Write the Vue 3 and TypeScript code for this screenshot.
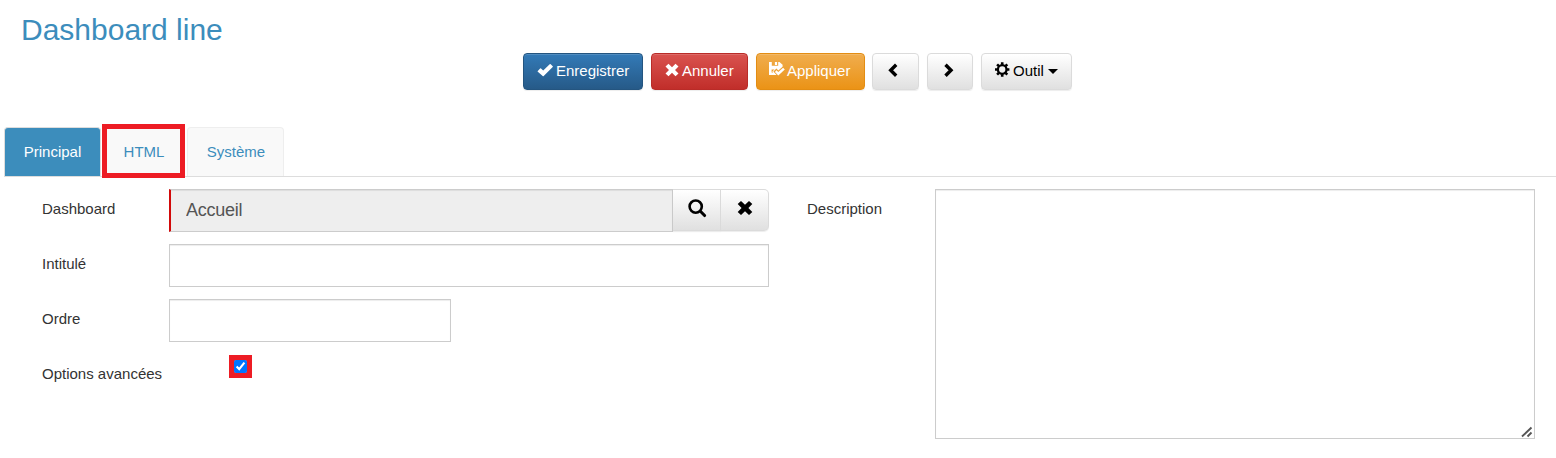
<script setup lang="ts">
import { ref } from 'vue'

interface Tab {
  id: string
  label: string
  highlighted?: boolean
}

const tabs: Tab[] = [
  { id: 'main', label: 'Principal' },
  { id: 'html', label: 'HTML', highlighted: true },
  { id: 'system', label: 'Système' },
]
const activeTab = ref('main')
const dashboard = ref('Accueil')
const title = ref('')
const order = ref('')
const description = ref('')
const advanced = ref(true)
</script>

<template>
  <main class="page">
    <h1>Dashboard line</h1>

    <div class="toolbar">
      <button type="button" class="btn primary">
        <svg width="16" height="14" viewBox="-.4 -.4 16 14"><path fill="currentColor" d="M.4 7.5 2.7 5.1q.4-.4.9 0l2.2 2.1L12.3.8q.5-.4 1 0l2 2q.4.5 0 .9l-9 9q-.5.5-1 0L.4 8.4q-.4-.4 0-.9z" /></svg>
        <span>Enregistrer</span>
      </button>
      <button type="button" class="btn danger">
        <svg width="14" height="14" viewBox="0 0 14 14"><path fill="currentColor" d="M3.5.7 7 4.2 10.5.7l3 2.9L10 7l3.5 3.4-3 2.9L7 9.8l-3.5 3.5-3-2.9L4 7 .5 3.6z" /></svg>
        <span>Annuler</span>
      </button>
      <button type="button" class="btn warning">
        <svg width="16" height="14" viewBox="0 0 16 14"><path fill="currentColor" fill-rule="evenodd" d="M0 0h2.8v3.8h6.4V0h1.3L13.6 2.8v2L9.3 8.4 7.4 6.6 4.4 9.6 7.6 13H0zM5.9 0h2.2v2.9H5.9zM2.6 7.4v3.2h1.6L3.3 9.6l2.2-2.2z" /><path fill="currentColor" d="m5.9 10 1.6-1.7 1.8 1.8 4.8-4.4 1.7 1.7-6.5 6.1z" /></svg>
        <span>Appliquer</span>
      </button>
      <button type="button" class="btn plain prev" aria-label="Précédent">
        <svg width="10" height="15" viewBox="0 0 10 15"><path fill="none" stroke="currentColor" stroke-width="3.4" d="M8.2 1.8 2.7 7.3l5.5 5.5" /></svg>
      </button>
      <button type="button" class="btn plain next" aria-label="Suivant">
        <svg width="10" height="15" viewBox="0 0 10 15"><path fill="none" stroke="currentColor" stroke-width="3.4" d="m1.5 1.8 5.5 5.5-5.5 5.5" /></svg>
      </button>
      <button type="button" class="btn plain tools">
        <svg width="15" height="15" viewBox="0 0 15 15">
          <circle cx="7.2" cy="7.5" r="4.3" fill="none" stroke="currentColor" stroke-width="2.3" />
          <path stroke="currentColor" stroke-width="2.6" d="M7.2.2v2.6M7.2 12.2v2.6M0 7.5h2.6M11.8 7.5h2.6M2.1 2.4l1.8 1.8M10.5 10.8l1.8 1.8M12.3 2.4l-1.8 1.8M3.9 10.8l-1.8 1.8" />
        </svg>
        <span>Outil</span>
        <i class="caret"></i>
      </button>
    </div>

    <nav class="tabs">
      <button
        v-for="tab in tabs"
        :key="tab.id"
        type="button"
        :class="['tab', tab.id, { active: activeTab === tab.id, highlighted: tab.highlighted }]"
        @click="activeTab = tab.id"
      >{{ tab.label }}</button>
    </nav>

    <form class="form" @submit.prevent>
      <div class="column">
        <div class="row">
          <label for="dashboard">Dashboard</label>
          <div class="group">
            <input id="dashboard" v-model="dashboard" class="field required" type="text" readonly />
            <button type="button" class="addon search" aria-label="Rechercher">
              <svg width="19" height="19" viewBox="0 0 19 19"><circle cx="7.7" cy="7.6" r="6.1" fill="none" stroke="currentColor" stroke-width="2.6" /><path stroke="currentColor" stroke-width="3.1" stroke-linecap="round" d="m12.6 12.5 4 4" /></svg>
            </button>
            <button type="button" class="addon last" aria-label="Effacer">
              <svg width="16" height="16" viewBox="0 0 16 16"><path fill="currentColor" d="M4 .9 8 4.7 12 .9 15.3 4.1 11.4 8l3.9 3.9-3.3 3.2-4-3.8-4 3.8-3.3-3.2L4.6 8 .7 4.1z" /></svg>
            </button>
          </div>
        </div>
        <div class="row">
          <label for="title">Intitulé</label>
          <input id="title" v-model="title" class="field" type="text" />
        </div>
        <div class="row">
          <label for="order">Ordre</label>
          <input id="order" v-model="order" class="field short" type="text" />
        </div>
        <div class="row">
          <label for="advanced">Options avancées</label>
          <span class="check"><input id="advanced" v-model="advanced" type="checkbox" /></span>
        </div>
      </div>
      <div class="column side">
        <label for="description">Description</label>
        <div class="area">
          <textarea id="description" v-model="description"></textarea>
          <svg class="grip" width="12" height="12" viewBox="0 0 12 12"><path fill="none" stroke="#555" stroke-width="1.9" d="m1 10.5 9.5-9M6.5 10.5l4-4" /></svg>
        </div>
      </div>
    </form>
  </main>
</template>

<style>
body {
  margin: 0;
  background: #fff;
}
</style>

<style scoped>
.page {
  height: 458px;
  overflow: hidden;
  font: 15px/21px "Liberation Sans", Arial, sans-serif;
  color: #333;
}
.page *,
.page {
  box-sizing: border-box;
}
button,
input,
textarea {
  font: inherit;
  margin: 0;
}
svg {
  display: block;
  flex: none;
}
h1 {
  margin: 0;
  padding: 12px 0 0 21px;
  height: 53px;
  font-size: 30px;
  line-height: 36px;
  font-weight: 400;
  color: #3c8dbc;
}
.toolbar {
  display: flex;
  height: 37px;
  padding-left: 523px;
}
.btn {
  display: flex;
  align-items: flex-start;
  height: 37px;
  padding: 6px 0 0 13px;
  border: 1px solid;
  border-radius: 4px;
  color: #fff;
  white-space: nowrap;
  box-shadow: inset 0 1px 0 rgba(255, 255, 255, .15), 0 1px 1px rgba(0, 0, 0, .075);
}
.btn svg {
  margin-top: 3px;
}
.btn span {
  margin-left: 3px;
}
.primary {
  width: 120px;
  margin-right: 8px;
  background: linear-gradient(#337ab7, #265a88);
  border-color: #245580;
}
.danger {
  width: 97px;
  margin-right: 8px;
  background: linear-gradient(#d9534f, #c12e2a);
  border-color: #b92c28;
}
.warning {
  width: 109px;
  margin-right: 7px;
  padding-left: 12px;
  background: linear-gradient(#f0ad4e, #eb9316);
  border-color: #e38d13;
}
.warning svg {
  margin-top: 2px;
}
.btn.warning span {
  margin-left: 2px;
}
.plain {
  color: #000;
  background: linear-gradient(#fff, #e0e0e0);
  border-color: #dbdbdb;
}
.prev {
  width: 47px;
  margin-right: 8px;
  padding-left: 15px;
}
.next {
  width: 46px;
  margin-right: 8px;
  padding-left: 16px;
}
.tools {
  width: 91px;
}
.tools svg {
  margin-top: 2px;
}
.caret {
  margin: 9px 0 0 4px;
  border: 5px solid transparent;
  border-top-color: #000;
  border-bottom: 0;
}
.tabs {
  display: flex;
  align-items: flex-end;
  height: 50px;
  margin: 37px 0 0 4px;
  border-bottom: 1px solid #ddd;
}
.tab {
  height: 49px;
  padding: 0 0 2px;
  border: 1px solid #eee;
  border-bottom: 0;
  border-radius: 4px 4px 0 0;
  background: #f9f9f9;
  color: #3c8dbc;
}
.tab.main {
  width: 97px;
  margin-right: 1px;
}
.tab.html {
  width: 83px;
  margin-right: 2px;
  padding-left: 1px;
}
.tab.system {
  width: 97px;
  padding-left: 1px;
}
.tab.active {
  background: #3c8dbc;
  border-color: #ddd;
  color: #fff;
}
.tab.highlighted {
  height: 54px;
  margin-bottom: -2px;
  padding-top: 1px;
  padding-bottom: 0;
  border: 5px solid #ed1c24;
  border-radius: 0;
}
.form {
  display: flex;
  padding: 12px 0 0 42px;
}
.column {
  width: 765px;
}
.row {
  display: flex;
  height: 55px;
}
label {
  flex: none;
  width: 127px;
  padding-top: 9px;
}
.group {
  display: flex;
  width: 600px;
}
.field {
  width: 600px;
  height: 43px;
  padding: 0 16px;
  border: 1px solid #ccc;
  border-radius: 0;
  outline: 0;
  background: #fff;
  color: #555;
  font-size: 18px;
  letter-spacing: -.25px;
  box-shadow: inset 0 1px 1px rgba(0, 0, 0, .075);
}
.short {
  width: 282px;
}
.required {
  width: 504px;
  padding-left: 15px;
  background: #eee;
  border-left: 2px solid #d20a0a;
}
.addon {
  display: flex;
  justify-content: center;
  width: 48px;
  height: 42px;
  padding: 9px 0 0;
  border: 1px solid #dbdbdb;
  border-left: 0;
  background: linear-gradient(#fff, #e0e0e0);
  color: #000;
  box-shadow: 0 1px 1px rgba(0, 0, 0, .075);
}
.addon.search {
  padding-left: 2px;
}
.addon.last {
  padding-top: 10px;
  border-radius: 0 5px 5px 0;
}
.check {
  display: flex;
  width: 23px;
  height: 23px;
  margin: 1px 0 0 60px;
  padding: 5px;
  background: #ed1c24;
}
.check input {
  width: 13px;
  height: 13px;
}
.side {
  display: flex;
  width: 728px;
}
.side label {
  width: 128px;
}
.area {
  position: relative;
  width: 600px;
  height: 250px;
}
textarea {
  display: block;
  width: 100%;
  height: 100%;
  padding: 9px 16px;
  border: 1px solid #ccc;
  outline: 0;
  resize: none;
  box-shadow: inset 0 1px 1px rgba(0, 0, 0, .075);
}
.grip {
  position: absolute;
  right: 2px;
  bottom: 1px;
  pointer-events: none;
}
</style>
